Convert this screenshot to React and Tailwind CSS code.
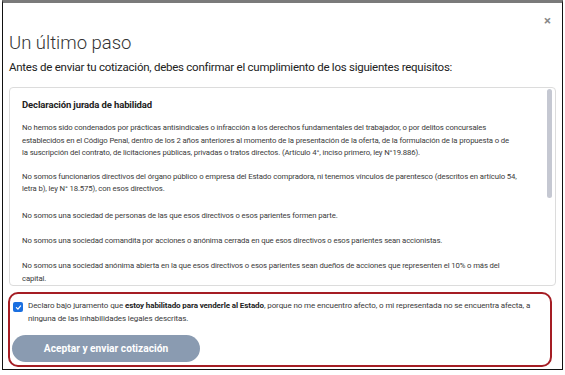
export default function App() {
  const font = { fontFamily: 'Roboto, "Noto Sans", sans-serif' };
  return (
    <div className="w-[565px] h-[375px] bg-white overflow-hidden" style={font}>
      <div className="ml-[2px] w-[561px] h-[370px] border-t-[3px] border-t-[#7a7a7a] border-x border-b border-x-[#111] border-b-[#111] flex flex-col px-[6px]">
        <div className="h-[25px] flex items-start justify-end pt-[11px] pr-[5px]">
          <span className="text-[13px] font-bold text-[#888] leading-none">×</span>
        </div>
        <h1 className="mt-[4px] text-[18.5px] font-light text-[#333] leading-[22px]">Un último paso</h1>
        <p className="mt-[6px] text-[11.5px] text-[#222] leading-[14px] tracking-[-0.25px]">
          Antes de enviar tu cotización, debes confirmar el cumplimiento de los siguientes requisitos:
        </p>
        <div className="mt-[13px] h-[199px] border border-[#dcdcdc] rounded-[4px] flex overflow-hidden shrink-0">
          <div className="flex-1 pl-[12px] pr-[2px] pt-[11px] text-[7.75px] leading-[12.5px] text-[#3a3a3a] tracking-[-0.12px] whitespace-nowrap overflow-hidden">
            <div className="text-[9.5px] font-bold text-[#222] leading-[12px]">Declaración jurada de habilidad</div>
            <p className="mt-[11px]">
              No hemos sido condenados por prácticas antisindicales o infracción a los derechos fundamentales del trabajador, o por delitos concursales<br />
              establecidos en el Código Penal, dentro de los 2 años anteriores al momento de la presentación de la oferta, de la formulación de la propuesta o de<br />
              la suscripción del contrato, de licitaciones públicas, privadas o tratos directos. (Artículo 4°, inciso primero, ley N°19.886).
            </p>
            <p className="mt-[11px]">
              No somos funcionarios directivos del órgano público o empresa del Estado compradora, ni tenemos vínculos de parentesco (descritos en artículo 54,<br />
              letra b), ley N° 18.575), con esos directivos.
            </p>
            <p className="mt-[14.5px]">
              No somos una sociedad de personas de las que esos directivos o esos parientes formen parte.
            </p>
            <p className="mt-[12.5px]">
              No somos una sociedad comandita por acciones o anónima cerrada en que esos directivos o esos parientes sean accionistas.
            </p>
            <p className="mt-[12.5px]">
              No somos una sociedad anónima abierta en la que esos directivos o esos parientes sean dueños de acciones que representen el 10% o más del<br />
              capital.
            </p>
          </div>
          <div className="w-[8px] pt-[1px] pr-[3px] shrink-0">
            <div className="w-[5px] h-[109px] rounded-full bg-[#c5c8d2]"></div>
          </div>
        </div>
        <div className="mt-[6px] w-[544px] -ml-[1px] h-[75px] border-2 border-[#a51d24] rounded-[10px] pl-[3px] pt-[6px] shrink-0">
          <div className="flex items-start gap-[5px]">
            <div className="mt-[2px] w-[10px] h-[10px] rounded-[2px] bg-[#1a6fe0] flex items-center justify-center shrink-0">
              <svg width="7" height="7" viewBox="0 0 10 10"><path d="M2 5.2 L4.2 7.3 L8 2.8" fill="none" stroke="white" strokeWidth="1.8" strokeLinecap="round" strokeLinejoin="round" /></svg>
            </div>
            <p className="text-[8px] leading-[12.5px] text-[#3a3a3a] tracking-[-0.1px]">
              Declaro bajo juramento que <span className="font-bold text-[#222]">estoy habilitado para venderle al Estado</span>, porque no me encuentro afecto, o mi representada no se encuentra afecta, a ninguna de las inhabilidades legales descritas.
            </p>
          </div>
          <button className="mt-[10px] ml-[-1px] w-[188px] h-[27px] rounded-full bg-[#8a9bb1] text-white text-[10.2px] font-bold">
            Aceptar y enviar cotización
          </button>
        </div>
      </div>
    </div>
  );
}
